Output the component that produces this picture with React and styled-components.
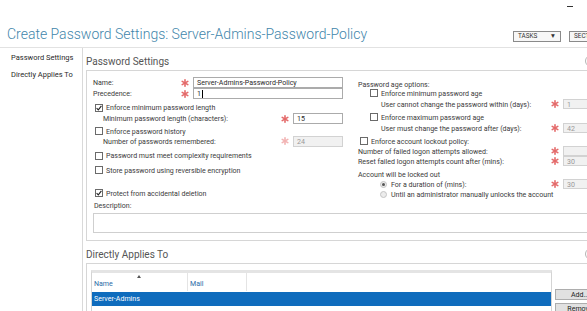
import React from 'react';
import styled, { createGlobalStyle } from 'styled-components';

const GlobalStyle = createGlobalStyle`
  html, body { margin: 0; padding: 0; background: #fff; }
  body { font-family: Roboto, "Liberation Sans", sans-serif; color: #222; }
  * { box-sizing: border-box; }
`;

const Window = styled.div`
  width: 587px;
  height: 311px;
  overflow: hidden;
  background: #fff;
  display: flex;
  flex-direction: column;
`;

const TopBar = styled.div`
  height: 20px;
  flex-shrink: 0;
  display: flex;
  justify-content: flex-end;
  padding: 6px 14px 0 0;
`;

const Minimize = styled.div`
  width: 6px;
  height: 1px;
  background: #333;
`;

const Header = styled.div`
  height: 28px;
  flex-shrink: 0;
  display: flex;
  align-items: flex-start;
  border-bottom: 1px solid #e2e2e2;
`;

const Title = styled.h1`
  margin: 6px 0 0 7px;
  font-size: 14px;
  line-height: 16px;
  font-weight: 300;
  color: #3f86ab;
  white-space: nowrap;
`;

const ToolGroup = styled.div`
  margin: 11px -22px 0 auto;
  display: flex;
  gap: 8px;
  flex-shrink: 0;
`;

const ToolButton = styled.div`
  width: ${p => p.$w}px;
  height: 11px;
  border: 1px solid #8a8a8a;
  background: #f7f7f7;
  font-size: 6.4px;
  line-height: 9px;
  color: #333;
  padding: 0 4px;
  display: flex;
  justify-content: space-between;
  align-items: center;
  white-space: nowrap;
  overflow: hidden;
`;

const Body = styled.div`
  flex: 1;
  min-height: 0;
  display: flex;
`;

const Nav = styled.div`
  width: 83px;
  flex-shrink: 0;
  border-right: 1px solid #d9d9d9;
  padding-top: 1px;
`;

const NavItem = styled.div`
  height: 17px;
  line-height: 17px;
  padding-left: 11px;
  font-size: 7.5px;
  color: #2a2a2a;
  white-space: nowrap;
`;

const Content = styled.div`
  width: 520px;
  flex-shrink: 0;
  padding-left: 3px;
`;

const SectionHead = styled.div`
  height: 22px;
  padding: 4px 6px 0 0;
  display: flex;
  align-items: center;
  font-size: 10px;
  color: #555;
`;

const Collapse = styled.div`
  margin-left: auto;
  width: 12px;
  height: 12px;
  border-radius: 50%;
  border: 1px solid #b5b5b5;
`;

const Panel = styled.div`
  border: 1px solid #d6d6d6;
  padding: ${p => p.$pad};
`;

const Columns = styled.div`
  display: flex;
`;

const Column = styled.div`
  width: ${p => p.$w}px;
  margin-left: ${p => p.$ml || 0}px;
  flex-shrink: 0;
  display: flex;
  flex-direction: column;
`;

const Row = styled.div`
  height: 11px;
  margin-top: ${p => p.$mt || 0}px;
  padding-left: ${p => p.$indent || 0}px;
  display: flex;
  align-items: center;
  font-size: 7.05px;
  color: #3a3a3a;
  white-space: nowrap;
`;

const Label = styled.span`
  flex: 1;
  ${p => p.$gap && `margin-left: ${p.$gap}px;`}
`;

const StarBox = styled.span`
  width: 10px;
  margin-right: 3px;
  display: flex;
  justify-content: center;
`;

const Input = styled.div`
  width: ${p => p.$w}px;
  height: ${p => p.$h || 11}px;
  flex-shrink: 0;
  border: 1px solid ${p => (p.$disabled ? '#d2d2d2' : '#ababab')};
  background: ${p => (p.$disabled ? '#f1f1f1' : '#fff')};
  color: ${p => (p.$disabled ? '#999' : '#2a2a2a')};
  padding-left: 3px;
  font-size: 7.05px;
  display: flex;
  align-items: center;
`;

const Caret = styled.span`
  width: 1px;
  height: 8px;
  background: #000;
  margin-left: 1px;
`;

const Box = styled.span`
  width: 8px;
  height: 8px;
  flex-shrink: 0;
  border: 1px solid #6a6a6a;
  background: #fff;
  display: flex;
  align-items: center;
  justify-content: center;
`;

const Radio = styled.span`
  width: 7px;
  height: 7px;
  flex-shrink: 0;
  border-radius: 50%;
  border: 1px solid #c4c4c4;
  background: #ececec;
  display: flex;
  align-items: center;
  justify-content: center;
  &::after {
    content: '';
    width: 3px;
    height: 3px;
    border-radius: 50%;
    background: ${p => (p.$on ? '#555' : 'transparent')};
  }
`;

const TextArea = styled.div`
  margin-top: 2px;
  height: 20px;
  border: 1px solid #cfcfcf;
  background: #fff;
`;

const ListArea = styled.div`
  display: flex;
  align-items: flex-start;
`;

const ListBox = styled.div`
  width: 461px;
  height: 60px;
  flex-shrink: 0;
  border: 1px solid #d4d4d4;
  border-top: 3px solid #e4e4e4;
`;

const ListHead = styled.div`
  height: 18px;
  display: flex;
`;

const HeadCell = styled.div`
  position: relative;
  width: ${p => p.$w}px;
  border-right: 1px solid #e4e4e4;
  padding: 6px 0 0 2px;
  font-size: 7.05px;
  color: #2c6aa6;
`;

const SortArrow = styled.span`
  position: absolute;
  top: 2px;
  left: 45px;
  width: 0;
  height: 0;
  border-left: 2px solid transparent;
  border-right: 2px solid transparent;
  border-bottom: 3px solid #555;
`;

const SelectedRow = styled.div`
  height: 14px;
  margin-top: 1px;
  background: #0f6cbd;
  color: #fff;
  font-size: 7.05px;
  line-height: 14px;
  padding-left: 2px;
`;

const SideButtons = styled.div`
  margin: 19px 0 0 3px;
  display: flex;
  flex-direction: column;
  gap: 3px;
`;

const SideButton = styled.div`
  width: 50px;
  height: 11px;
  background: #e1e1e1;
  border: 1px solid #adadad;
  font-size: 7.05px;
  line-height: 9px;
  text-align: center;
  color: #222;
`;

const Star = ({ faded }) => (
  <StarBox>
    <svg width="8" height="8" viewBox="0 0 8 8">
      <g stroke={faded ? '#f2b3b3' : '#e46a6a'} strokeWidth="1.6" strokeLinecap="round">
        <line x1="4" y1="0.8" x2="4" y2="7.2" />
        <line x1="1.2" y1="2.4" x2="6.8" y2="5.6" />
        <line x1="1.2" y1="5.6" x2="6.8" y2="2.4" />
      </g>
    </svg>
  </StarBox>
);

const Check = ({ checked }) => (
  <Box>
    {checked && (
      <svg width="6" height="6" viewBox="0 0 6 6">
        <path d="M0.6 3.1 L2.3 4.8 L5.4 0.8" fill="none" stroke="#222" strokeWidth="1.1" />
      </svg>
    )}
  </Box>
);

const CheckRow = ({ mt, indent, checked, children }) => (
  <Row $mt={mt} $indent={indent}>
    <Check checked={checked} />
    <Label $gap={3}>{children}</Label>
  </Row>
);

const FieldRow = ({ mt, indent, label, w, h, value, disabled, faded, caret }) => (
  <Row $mt={mt} $indent={indent}>
    <Label>{label}</Label>
    <Star faded={faded} />
    <Input $w={w} $h={h} $disabled={disabled}>
      {value}
      {caret && <Caret />}
    </Input>
  </Row>
);

const App = () => (
  <Window>
    <GlobalStyle />
    <TopBar>
      <Minimize />
    </TopBar>
    <Header>
      <Title>Create Password Settings: Server-Admins-Password-Policy</Title>
      <ToolGroup>
        <ToolButton $w={48}>
          <span>TASKS</span>
          <span>▼</span>
        </ToolButton>
        <ToolButton $w={40}>
          <span>SECTIONS</span>
        </ToolButton>
      </ToolGroup>
    </Header>
    <Body>
      <Nav>
        <NavItem>Password Settings</NavItem>
        <NavItem>Directly Applies To</NavItem>
      </Nav>
      <Content>
        <SectionHead>
          Password Settings
          <Collapse />
        </SectionHead>
        <Panel $pad="6px 0 7px 6px">
          <Columns>
            <Column $w={250}>
              <FieldRow label="Name:" w={150} value="Server-Admins-Password-Policy" />
              <FieldRow label="Precedence:" w={150} value="1" caret />
              <CheckRow mt={3} indent={2} checked>Enforce minimum password length</CheckRow>
              <FieldRow indent={10} label="Minimum password length (characters):" w={50} value="15" />
              <CheckRow mt={1.5} indent={2}>Enforce password history</CheckRow>
              <FieldRow mt={-1} indent={10} label="Number of passwords remembered:" w={50} value="24" disabled faded />
              <CheckRow mt={3.5} indent={2}>Password must meet complexity requirements</CheckRow>
              <CheckRow mt={3.5} indent={2}>Store password using reversible encryption</CheckRow>
              <CheckRow mt={12} indent={2} checked>Protect from accidental deletion</CheckRow>
              <Row $mt={1.5} $indent={1}>Description:</Row>
            </Column>
            <Column $w={255} $ml={15}>
              <Row $mt={1.5}>Password age options:</Row>
              <CheckRow mt={-2} indent={12}>Enforce minimum password age</CheckRow>
              <FieldRow indent={23} label="User cannot change the password within (days):" w={50} h={10} value="1" disabled />
              <CheckRow mt={2} indent={12}>Enforce maximum password age</CheckRow>
              <FieldRow indent={23} label="User must change the password after (days):" w={50} h={10} value="42" disabled />
              <CheckRow mt={2} indent={2}>Enforce account lockout policy:</CheckRow>
              <FieldRow mt={-1} label="Number of failed logon attempts allowed:" w={50} h={10} disabled />
              <FieldRow mt={-1} label="Reset failed logon attempts count after (mins):" w={50} h={10} value="30" disabled />
              <Row $mt={2}>Account will be locked out</Row>
              <Row $mt={-1} $indent={22}>
                <Radio $on />
                <Label $gap={4}>For a duration of (mins):</Label>
                <Star />
                <Input $w={50} $h={10} $disabled>30</Input>
              </Row>
              <Row $mt={-0.5} $indent={22}>
                <Radio />
                <Label $gap={4}>Until an administrator manually unlocks the account</Label>
              </Row>
            </Column>
          </Columns>
          <TextArea />
        </Panel>
        <SectionHead>
          Directly Applies To
          <Collapse />
        </SectionHead>
        <Panel $pad="6px 0 0 4px">
          <ListArea>
            <ListBox>
              <ListHead>
                <HeadCell $w={96}>
                  Name
                  <SortArrow />
                </HeadCell>
                <HeadCell $w={59}>Mail</HeadCell>
              </ListHead>
              <SelectedRow>Server-Admins</SelectedRow>
            </ListBox>
            <SideButtons>
              <SideButton>Add...</SideButton>
              <SideButton>Remove</SideButton>
            </SideButtons>
          </ListArea>
        </Panel>
      </Content>
    </Body>
  </Window>
);

export default App;
